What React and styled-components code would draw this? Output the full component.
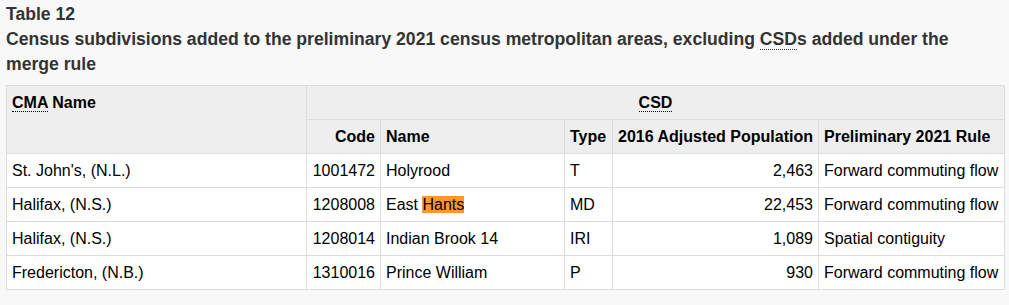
import React from 'react'
import styled, { createGlobalStyle } from 'styled-components'

const GlobalStyle = createGlobalStyle`
  html, body {
    margin: 0;
    padding: 0;
    background: #f8f8f8;
  }
  body {
    font-family: "Liberation Sans", Arial, sans-serif;
    font-size: 16px;
    line-height: 1.4375;
    color: #333;
  }
`

const Page = styled.div`
  padding: 2px 5px 16px 6px;
`

const Table = styled.table`
  width: 998px;
  table-layout: fixed;
  border-collapse: collapse;
  color: #000;
`

const Caption = styled.caption`
  text-align: left;
  font-size: 17.6px;
  font-weight: bold;
  line-height: 25px;
  color: #333;
  padding-bottom: 8px;
`

const Abbr = styled.abbr`
  text-decoration: none;
  border-bottom: 1px dotted currentColor;
  cursor: help;
`

const Th = styled.th`
  background: #eee;
  border: 1px solid #ddd;
  padding: 5px;
  font-weight: bold;
  vertical-align: top;
  text-align: ${(p) => p.$align || 'left'};
  white-space: nowrap;
`

const Td = styled.td`
  background: #fff;
  border: 1px solid #ddd;
  padding: 5px;
  vertical-align: top;
  text-align: ${(p) => (p.$num ? 'right' : 'left')};
  white-space: nowrap;
`

const Mark = styled.mark`
  background: #ff9632;
  color: #000;
`

const rows = [
  { cma: "St. John's, (N.L.)", code: '1001472', name: 'Holyrood', type: 'T', pop: '2,463', rule: 'Forward commuting flow' },
  { cma: 'Halifax, (N.S.)', code: '1208008', name: 'East', hit: 'Hants', type: 'MD', pop: '22,453', rule: 'Forward commuting flow' },
  { cma: 'Halifax, (N.S.)', code: '1208014', name: 'Indian Brook 14', type: 'IRI', pop: '1,089', rule: 'Spatial contiguity' },
  { cma: 'Fredericton, (N.B.)', code: '1310016', name: 'Prince William', type: 'P', pop: '930', rule: 'Forward commuting flow' },
]

const widths = [300, 74, 184, 48, 206, 186]

export default function App() {
  return (
    <Page>
      <GlobalStyle />
      <Table>
        <Caption>
          Table 12
          <br />
          Census subdivisions added to the preliminary 2021 census metropolitan areas, excluding{' '}
          <Abbr title="Census subdivision">CSD</Abbr>s added under the merge rule
        </Caption>
        <colgroup>
          {widths.map((w, i) => (
            <col key={i} style={{ width: w }} />
          ))}
        </colgroup>
        <thead>
          <tr>
            <Th rowSpan={2}>
              <Abbr title="Census metropolitan area">CMA</Abbr> Name
            </Th>
            <Th colSpan={5} $align="center">
              <Abbr title="Census subdivision">CSD</Abbr>
            </Th>
          </tr>
          <tr>
            <Th $align="right">Code</Th>
            <Th>Name</Th>
            <Th>Type</Th>
            <Th $align="right">2016 Adjusted Population</Th>
            <Th>Preliminary 2021 Rule</Th>
          </tr>
        </thead>
        <tbody>
          {rows.map((r) => (
            <tr key={r.code}>
              <Td>{r.cma}</Td>
              <Td $num>{r.code}</Td>
              <Td>
                {r.name}
                {r.hit && (
                  <>
                    {' '}
                    <Mark>{r.hit}</Mark>
                  </>
                )}
              </Td>
              <Td>{r.type}</Td>
              <Td $num>{r.pop}</Td>
              <Td>{r.rule}</Td>
            </tr>
          ))}
        </tbody>
      </Table>
    </Page>
  )
}
